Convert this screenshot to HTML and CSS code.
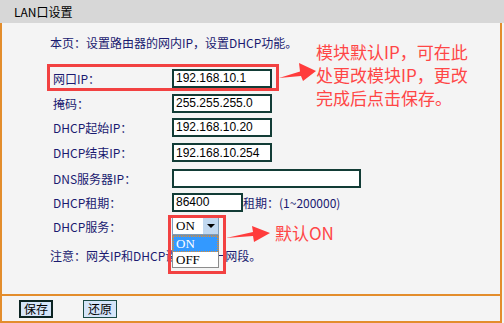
FILE: index.html
```html
<!DOCTYPE html>
<html lang="zh-CN">
<head>
  <meta charset="UTF-8"/>
  <title>LAN口设置</title>
  <link rel="stylesheet" href="styles.css">
</head>
<body>
  <div class="page">
    <div class="head">LAN口设置</div>

    <div class="body">
      <p class="intro">本页：设置路由器的网内IP，设置DHCP功能。</p>
      <div class="form">
        <div class="row r-ip"><span class="label">网口IP：</span><input class="field" value="192.168.10.1"></div>
        <div class="row"><span class="label">掩码：</span><input class="field" value="255.255.255.0"></div>
        <div class="row"><span class="label">DHCP起始IP：</span><input class="field" value="192.168.10.20"></div>
        <div class="row r-end"><span class="label">DHCP结束IP：</span><input class="field" value="192.168.10.254"></div>
        <div class="row"><span class="label">DNS服务器IP：</span><input class="field wide" value=""></div>
        <div class="row"><span class="label">DHCP租期：</span><input class="field short" value="86400"><span>租期：(1~200000)</span></div>
        <div class="row"><span class="label">DHCP服务：</span>
          <div class="select"><span class="select-value">ON</span><span class="select-btn"></span></div>
        </div>
      </div>
      <p class="note">注意：网关IP和DHCP设置在同一网段。</p>
    </div>

    <div class="foot">
      <button class="btn btn-save">保存</button>
      <button class="btn">还原</button>
    </div>

    <!-- open dropdown -->
    <div class="options">
      <div class="opt active">ON</div>
      <div class="opt">OFF</div>
    </div>

    <!-- annotations -->
    <div class="mark mark-ip"></div>
    <div class="mark mark-dhcp"></div>
    <svg class="arrows" width="504" height="323" viewBox="0 0 504 323">
      <polygon points="279,78 301,76 303,81 316,71 299,63 300,71.5"/>
      <polygon points="226,238 253,236 254,242 270,233 252,226 253,232"/>
    </svg>
    <div class="tip tip-ip">
      <div>模块默认IP，可在此</div>
      <div>处更改模块IP，更改</div>
      <div>完成后点击保存。</div>
    </div>
    <div class="tip tip-on">默认ON</div>
  </div>
</body>
</html>
```

FILE: styles.css
```css
:root {
  --orange: #e38d2c;
  --navy: #1a1a70;
  --red: #f24141;
  --field-border: #123c36;
}
* { box-sizing: border-box; }
body {
  margin: 0;
  background: #f4f4f4;
  color: var(--navy);
  font: 12px "Noto Sans CJK SC", sans-serif;
}
.page { position: relative; width: 504px; height: 323px; }

.head {
  height: 23px;
  background: #d7d7d7;
  color: #000;
  padding-left: 14px;
  display: flex; align-items: center;
}

.body {
  width: 502px; height: 273px;
  border: 2px solid var(--orange); border-top: 0;
  padding: 12px 0 0 48px;
}
.intro, .note { margin: 0; line-height: 16px; }
.note { margin-top: 10px; }

.form { margin-top: 14px; padding-left: 3px; }
.row { display: flex; align-items: center; height: 24px; }
.row.r-ip { height: 26px; }
.row.r-end { height: 27px; }
.label { width: 119px; flex: none; }

.field {
  width: 100px; height: 19px;
  border: 2px solid var(--field-border);
  padding: 0 2px;
  background: #fff; color: #000;
  font: 12px "Liberation Sans", sans-serif;
}
.field.wide { width: 189px; }
.field.short { width: 71px; }

.select {
  display: flex;
  width: 47px; height: 18px;
  border: 1px solid #7f9db9;
  background: #fff; color: #000;
  font: 13px "Liberation Serif", serif;
}
.select-value { flex: 1; padding-left: 3px; line-height: 16px; }
.select-btn {
  width: 15px;
  background: #c1d8f0;
  display: flex; align-items: center; justify-content: center;
}
.select-btn::after {
  content: "";
  border-left: 4px solid transparent;
  border-right: 4px solid transparent;
  border-top: 4px solid #000;
}

.options {
  position: absolute; left: 172px; top: 235px;
  width: 47px; height: 33px;
  border: 1px solid #8c8c8c;
  background: #fff; color: #000;
  font: 13px "Liberation Serif", serif;
}
.opt { height: 15.5px; line-height: 15px; padding-left: 3px; }
.opt.active {
  background: #3399ff; color: #fff;
  outline: 1px dotted var(--orange); outline-offset: -1px;
}

.foot {
  width: 502px; height: 27px;
  border: 2px solid var(--orange); border-top: 0;
  display: flex; align-items: center; gap: 30px;
  padding-left: 17px;
}
.btn {
  width: 34px; height: 18px; padding: 0;
  background: #d5e5f9; color: #000;
  border: 1px solid #1b4a44;
  font: 12px "Noto Sans CJK SC", sans-serif;
  line-height: 14px;
}
.btn-save { border: 2px solid #0c2422; }

/* annotations */
.mark { position: absolute; border: 3px solid var(--red); }
.mark-ip { left: 47px; top: 64px; width: 232px; height: 27px; }
.mark-dhcp { left: 168px; top: 215px; width: 58px; height: 59px; }
.arrows { position: absolute; left: 0; top: 0; fill: #ff3c3c; pointer-events: none; }
.tip { position: absolute; color: #ff4646; font-size: 17px; line-height: 23px; }
.tip-ip { left: 316px; top: 40px; }
.tip-on { left: 275px; top: 222px; line-height: 22px; }
```
